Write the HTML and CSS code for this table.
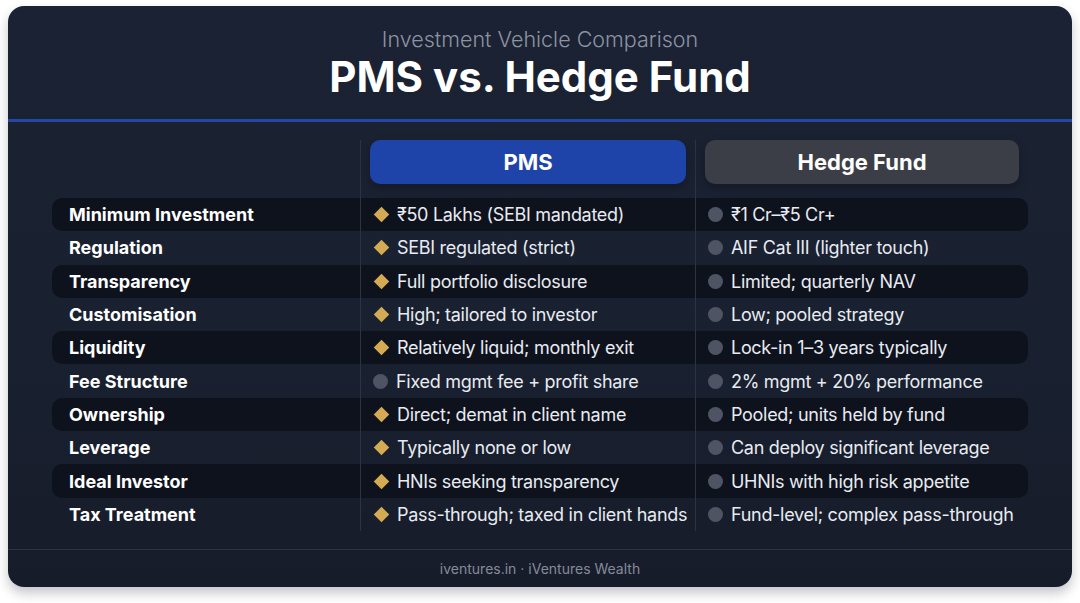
FILE: index.html
```html
<!DOCTYPE html>
<html>
<head>
<meta charset="utf-8">
<link rel="stylesheet" href="styles.css">
</head>
<body>
<div class="card">
  <header class="head">
    <div class="sub">Investment Vehicle Comparison</div>
    <h1 class="title">PMS vs. Hedge Fund</h1>
  </header>
  <div class="rule"></div>
  <div class="table">
    <div class="row hrow">
      <div class="cell label"></div>
      <div class="cell col"><div class="pill pms">PMS</div></div>
      <div class="cell col"><div class="pill hf">Hedge Fund</div></div>
    </div>
    <div class="row stripe">
      <div class="cell label">Minimum Investment</div>
      <div class="cell col"><span class="dia"></span>₹50 Lakhs (SEBI mandated)</div>
      <div class="cell col"><span class="dot"></span>₹1 Cr–₹5 Cr+</div>
    </div>
    <div class="row">
      <div class="cell label">Regulation</div>
      <div class="cell col"><span class="dia"></span>SEBI regulated (strict)</div>
      <div class="cell col"><span class="dot"></span>AIF Cat III (lighter touch)</div>
    </div>
    <div class="row stripe">
      <div class="cell label">Transparency</div>
      <div class="cell col"><span class="dia"></span>Full portfolio disclosure</div>
      <div class="cell col"><span class="dot"></span>Limited; quarterly NAV</div>
    </div>
    <div class="row">
      <div class="cell label">Customisation</div>
      <div class="cell col"><span class="dia"></span>High; tailored to investor</div>
      <div class="cell col"><span class="dot"></span>Low; pooled strategy</div>
    </div>
    <div class="row stripe">
      <div class="cell label">Liquidity</div>
      <div class="cell col"><span class="dia"></span>Relatively liquid; monthly exit</div>
      <div class="cell col"><span class="dot"></span>Lock-in 1–3 years typically</div>
    </div>
    <div class="row">
      <div class="cell label">Fee Structure</div>
      <div class="cell col"><span class="dot"></span>Fixed mgmt fee + profit share</div>
      <div class="cell col"><span class="dot"></span>2% mgmt + 20% performance</div>
    </div>
    <div class="row stripe">
      <div class="cell label">Ownership</div>
      <div class="cell col"><span class="dia"></span>Direct; demat in client name</div>
      <div class="cell col"><span class="dot"></span>Pooled; units held by fund</div>
    </div>
    <div class="row">
      <div class="cell label">Leverage</div>
      <div class="cell col"><span class="dia"></span>Typically none or low</div>
      <div class="cell col"><span class="dot"></span>Can deploy significant leverage</div>
    </div>
    <div class="row stripe">
      <div class="cell label">Ideal Investor</div>
      <div class="cell col"><span class="dia"></span>HNIs seeking transparency</div>
      <div class="cell col"><span class="dot"></span>UHNIs with high risk appetite</div>
    </div>
    <div class="row">
      <div class="cell label">Tax Treatment</div>
      <div class="cell col"><span class="dia"></span>Pass-through; taxed in client hands</div>
      <div class="cell col"><span class="dot"></span>Fund-level; complex pass-through</div>
    </div>
  </div>
  <footer class="foot">iventures.in · iVentures Wealth</footer>
</div>
</body>
</html>
```
FILE: styles.css
```css
* { box-sizing: border-box; }
html, body { margin: 0; padding: 0; background: #ffffff; }
body {
  font-family: Inter, "Noto Sans", sans-serif;
  padding: 6px 8px 0 8px;
  width: 1080px;
  height: 603px;
}
.card {
  width: 1064px;
  height: 581px;
  border-radius: 16px;
  background: linear-gradient(180deg, #1b2233 0%, #19202f 60%, #161c2a 100%);
  box-shadow: 0 6px 12px rgba(20, 25, 40, 0.25);
  display: flex;
  flex-direction: column;
  overflow: hidden;
}
.head {
  height: 113px;
  display: flex;
  flex-direction: column;
  align-items: center;
  padding-top: 21px;
}
.sub {
  font-size: 21.5px;
  font-weight: 300;
  color: #8d93a3;
  line-height: 24px;
  letter-spacing: 0;
}
.title {
  margin: 2px 0 0 0;
  font-size: 42px;
  font-weight: 700;
  color: #ffffff;
  line-height: 48px;
  letter-spacing: 0;
}
.rule {
  height: 3px;
  background: #2447a8;
}
.table {
  padding: 18px 44px 0 44px;
  display: flex;
  flex-direction: column;
}
.row {
  display: grid;
  grid-template-columns: 308px 335px 333px;
  height: 33.3px;
  border-radius: 10px;
}
.row.hrow { height: 58px; }
.row.stripe { background: #0e121d; }
.cell {
  display: flex;
  align-items: center;
  font-size: 18px;
  color: #e8ebf1;
  letter-spacing: -0.3px;
  white-space: nowrap;
}
.label {
  padding-left: 17px;
  font-weight: 700;
  color: #ffffff;
  letter-spacing: 0;
}
.col {
  border-left: 1px solid #2c3343;
  padding-left: 12px;
}
.hrow .col {
  align-items: flex-start;
  padding: 0 9px 0 9px;
}
.pill {
  width: 100%;
  height: 44px;
  border-radius: 10px;
  display: flex;
  align-items: center;
  justify-content: center;
  font-size: 22px;
  font-weight: 700;
  color: #ffffff;
  letter-spacing: 0;
  box-shadow: 0 4px 10px rgba(0, 0, 0, 0.25);
}
.pms { background: #1e43a9; }
.hf { background: #3b3e46; }
.dia {
  width: 11px;
  height: 11px;
  background: #d4ab52;
  transform: rotate(45deg);
  margin: 0 10px 0 3px;
  flex: none;
}
.dot {
  width: 15px;
  height: 15px;
  border-radius: 50%;
  background: #4e5464;
  margin-right: 8px;
  flex: none;
}
.foot {
  margin-top: auto;
  height: 38px;
  border-top: 1px solid #2c3343;
  display: flex;
  align-items: center;
  justify-content: center;
  font-size: 14px;
  color: #858b9a;
}
```
